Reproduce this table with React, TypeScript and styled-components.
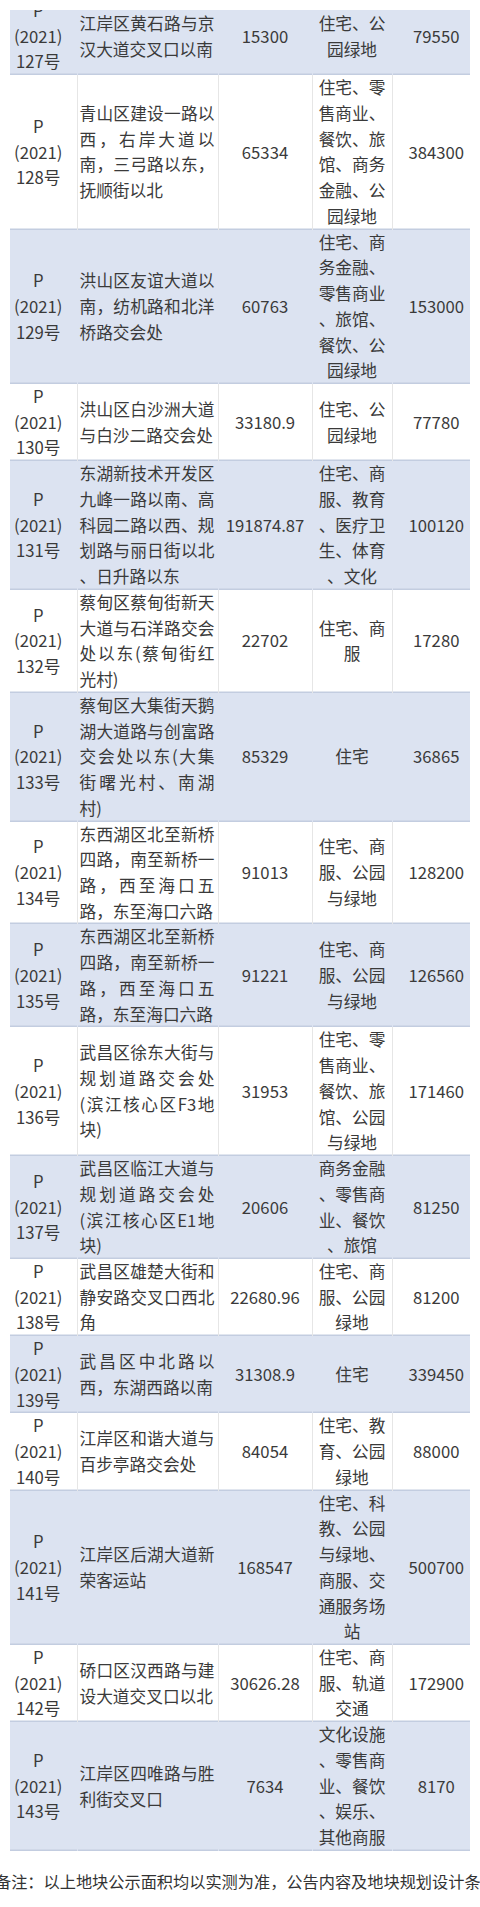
import styled, { createGlobalStyle } from "styled-components";

const GlobalStyle = createGlobalStyle`
  html, body {
    margin: 0;
    padding: 0;
    background: #fff;
  }
  body {
    width: 480px;
    overflow: hidden;
    font-family: "Noto Sans CJK SC", "Noto Sans", sans-serif;
    color: #3a3a3a;
  }
`;

const Page = styled.div`
  width: 480px;
  padding-top: 10px;
  overflow: hidden;
`;

const Clip = styled.div`
  margin: 0 10px;
  overflow: hidden;
`;

const Table = styled.table`
  width: 460px;
  margin-top: -12px;
  border-collapse: collapse;
  table-layout: fixed;
  font-size: 16.7px;
  line-height: 25.73px;
`;

const Row = styled.tr<{ $shaded: boolean }>`
  background: ${(p) => (p.$shaded ? "#dce3f1" : "#fff")};

  td {
    box-shadow: inset 0 -1.5px 0 #c3cde0;
  }
  td + td {
    border-left: 1.5px solid ${(p) => (p.$shaded ? "#dce3f1" : "#e6e6e6")};
  }
`;

const Cell = styled.td<{ $align?: "left" | "center" }>`
  padding: 0;
  vertical-align: middle;
  text-align: ${(p) => p.$align ?? "center"};
  white-space: nowrap;
`;

const IdCell = styled(Cell)`
  padding-right: 10px;
`;

const AddrCell = styled(Cell)`
  padding: 0 3px 0 2px;
`;

const PriceCell = styled(Cell)`
  padding-left: 10px;
`;

const Line = styled.div<{ $spread?: boolean }>`
  ${(p) =>
    p.$spread
      ? `text-align: justify; text-align-last: justify; text-justify: inter-character;`
      : ""}
`;

const Note = styled.p`
  margin: 18px 0 0 -5px;
  font-size: 16.2px;
  line-height: 25.73px;
  white-space: nowrap;
  color: #333;
`;

type Plot = {
  no: string;
  addr: string[];
  area: string;
  use: string[];
  price: string;
};

const plots: Plot[] = [
  { no: "127", addr: ["江岸区黄石路与京", "汉大道交叉口以南"], area: "15300", use: ["住宅、公", "园绿地"], price: "79550" },
  {
    no: "128",
    addr: ["青山区建设一路以", "西，右岸大道以", "南，三弓路以东，", "抚顺街以北"],
    area: "65334",
    use: ["住宅、零", "售商业、", "餐饮、旅", "馆、商务", "金融、公", "园绿地"],
    price: "384300",
  },
  {
    no: "129",
    addr: ["洪山区友谊大道以", "南，纺机路和北洋", "桥路交会处"],
    area: "60763",
    use: ["住宅、商", "务金融、", "零售商业", "、旅馆、", "餐饮、公", "园绿地"],
    price: "153000",
  },
  { no: "130", addr: ["洪山区白沙洲大道", "与白沙二路交会处"], area: "33180.9", use: ["住宅、公", "园绿地"], price: "77780" },
  {
    no: "131",
    addr: ["东湖新技术开发区", "九峰一路以南、高", "科园二路以西、规", "划路与丽日街以北", "、日升路以东"],
    area: "191874.87",
    use: ["住宅、商", "服、教育", "、医疗卫", "生、体育", "、文化"],
    price: "100120",
  },
  {
    no: "132",
    addr: ["蔡甸区蔡甸街新天", "大道与石洋路交会", "处以东(蔡甸街红", "光村)"],
    area: "22702",
    use: ["住宅、商", "服"],
    price: "17280",
  },
  {
    no: "133",
    addr: ["蔡甸区大集街天鹅", "湖大道路与创富路", "交会处以东(大集", "街曙光村、南湖", "村)"],
    area: "85329",
    use: ["住宅"],
    price: "36865",
  },
  {
    no: "134",
    addr: ["东西湖区北至新桥", "四路，南至新桥一", "路，西至海口五", "路，东至海口六路"],
    area: "91013",
    use: ["住宅、商", "服、公园", "与绿地"],
    price: "128200",
  },
  {
    no: "135",
    addr: ["东西湖区北至新桥", "四路，南至新桥一", "路，西至海口五", "路，东至海口六路"],
    area: "91221",
    use: ["住宅、商", "服、公园", "与绿地"],
    price: "126560",
  },
  {
    no: "136",
    addr: ["武昌区徐东大街与", "规划道路交会处", "(滨江核心区F3地", "块)"],
    area: "31953",
    use: ["住宅、零", "售商业、", "餐饮、旅", "馆、公园", "与绿地"],
    price: "171460",
  },
  {
    no: "137",
    addr: ["武昌区临江大道与", "规划道路交会处", "(滨江核心区E1地", "块)"],
    area: "20606",
    use: ["商务金融", "、零售商", "业、餐饮", "、旅馆"],
    price: "81250",
  },
  {
    no: "138",
    addr: ["武昌区雄楚大街和", "静安路交叉口西北", "角"],
    area: "22680.96",
    use: ["住宅、商", "服、公园", "绿地"],
    price: "81200",
  },
  { no: "139", addr: ["武昌区中北路以", "西，东湖西路以南"], area: "31308.9", use: ["住宅"], price: "339450" },
  {
    no: "140",
    addr: ["江岸区和谐大道与", "百步亭路交会处"],
    area: "84054",
    use: ["住宅、教", "育、公园", "绿地"],
    price: "88000",
  },
  {
    no: "141",
    addr: ["江岸区后湖大道新", "荣客运站"],
    area: "168547",
    use: ["住宅、科", "教、公园", "与绿地、", "商服、交", "通服务场", "站"],
    price: "500700",
  },
  {
    no: "142",
    addr: ["硚口区汉西路与建", "设大道交叉口以北"],
    area: "30626.28",
    use: ["住宅、商", "服、轨道", "交通"],
    price: "172900",
  },
  {
    no: "143",
    addr: ["江岸区四唯路与胜", "利街交叉口"],
    area: "7634",
    use: ["文化设施", "、零售商", "业、餐饮", "、娱乐、", "其他商服"],
    price: "8170",
  },
];

const App = () => {
  return (
    <Page>
      <GlobalStyle />
      <Clip>
        <Table>
          <colgroup>
            <col style={{ width: 67 }} />
            <col style={{ width: 141 }} />
            <col style={{ width: 94 }} />
            <col style={{ width: 80 }} />
            <col style={{ width: 78 }} />
          </colgroup>
          <tbody>
            {plots.map((p, i) => (
              <Row key={p.no} $shaded={i % 2 === 0}>
                <IdCell>
                  <Line>P</Line>
                  <Line>(2021)</Line>
                  <Line>{p.no}号</Line>
                </IdCell>
                <AddrCell $align="left">
                  {p.addr.map((l, j) => (
                    <Line key={j} $spread={j < p.addr.length - 1}>
                      {l}
                    </Line>
                  ))}
                </AddrCell>
                <Cell>{p.area}</Cell>
                <Cell>
                  {p.use.map((l, j) => (
                    <Line key={j}>{l}</Line>
                  ))}
                </Cell>
                <PriceCell>{p.price}</PriceCell>
              </Row>
            ))}
          </tbody>
        </Table>
      </Clip>
      <Note>备注：以上地块公示面积均以实测为准，公告内容及地块规划设计条件</Note>
    </Page>
  );
};

export default App;
